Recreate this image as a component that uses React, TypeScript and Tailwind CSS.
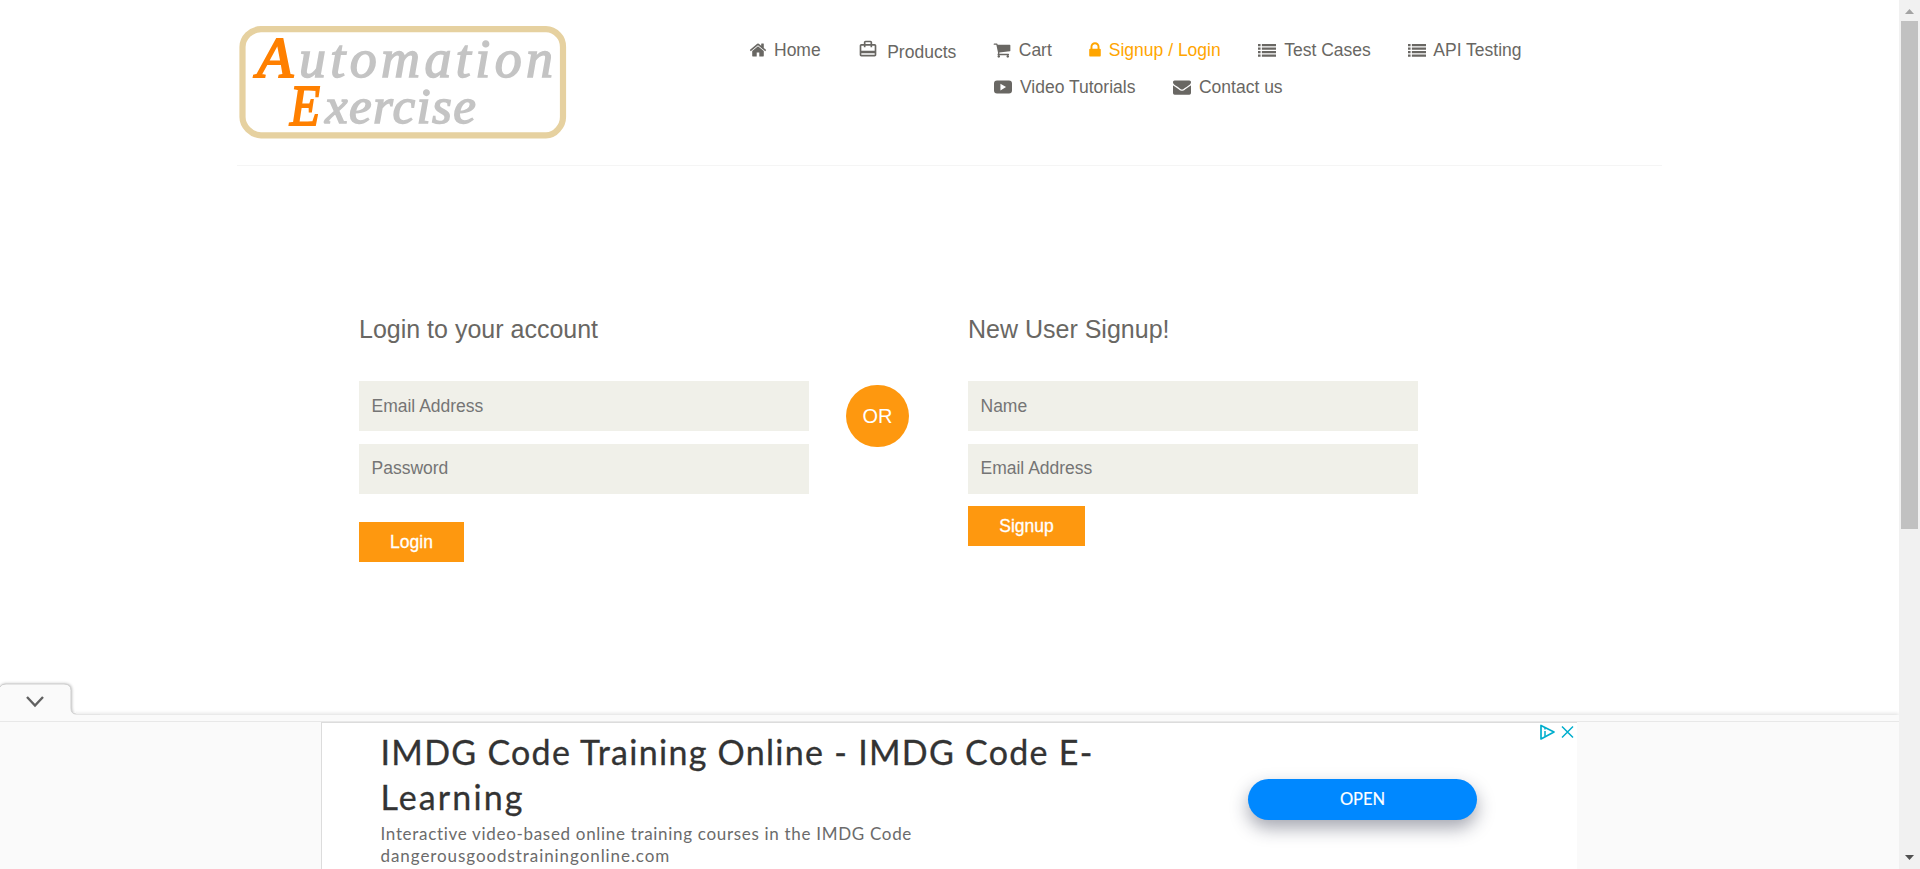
import type { ReactNode } from 'react';
import { MdCardTravel } from 'react-icons/md';

const HOME =
  'M1472 992v480q0 26-19 45t-45 19h-384v-384h-256v384h-384q-26 0-45-19t-19-45v-480q0-1 .5-3t.5-3l575-474 575 474q1 2 1 6zm223-69l-62 74q-8 9-21 11h-3q-13 0-21-7l-692-577-692 577q-12 8-24 7-13-2-21-11l-62-74q-8-10-7-23.5t11-21.5l719-599q32-26 76-26t76 26l244 204v-195q0-14 9-23t23-9h192q14 0 23 9t9 23v408l219 182q10 8 11 21.5t-7 23.5z';
const LOCK =
  'M640 768h512v-192q0-106-75-181t-181-75-181 75-75 181v192zm832 96v576q0 40-28 68t-68 28h-960q-40 0-68-28t-28-68v-576q0-40 28-68t68-28h32v-192q0-184 132-316t316-132 316 132 132 316v192h32q40 0 68 28t28 68z';
const CART =
  'M704 1536q0 52-38 90t-90 38-90-38-38-90 38-90 90-38 90 38 38 90zm896 0q0 52-38 90t-90 38-90-38-38-90 38-90 90-38 90 38 38 90zm128-1088v512q0 24-16.5 42.5t-40.5 21.5l-1044 122q13 60 13 70 0 16-24 64h920q26 0 45 19t19 45-19 45-45 19h-1024q-26 0-45-19t-19-45q0-11 8-31.5t16-36 21.5-40 15.5-29.5l-177-823h-204q-26 0-45-19t-19-45 19-45 45-19h256q16 0 28.5 6.5t19.5 15.5 13 24.5 8 26 5.5 29.5 4.5 26h1201q26 0 45 19t19 45z';
const MAIL =
  'M1792 710v794q0 66-47 113t-113 47h-1472q-66 0-113-47t-47-113v-794q44 49 101 87 362 246 497 345 57 42 92.5 65.5t94.5 48 110 24.5h2q51 0 110-24.5t94.5-48 92.5-65.5q170-123 498-345 57-39 100-87zm0-294q0 79-49 151t-122 123q-376 261-468 325-10 7-42.5 31t-54 38.5-52 32.5-57.5 27-50 9h-2q-23 0-50-9t-57.5-27-52-32.5-54-38.5-42.5-31q-91-64-262-182.5t-205-142.5q-62-42-117-115.5t-55-136.5q0-78 41.5-130t118.5-52h1472q65 0 112.5 47t47.5 113z';
const LIST =
  'M0 288h256v224H0zM0 640h256v224H0zM0 992h256v224H0zM0 1344h256v224H0zM384 288h1408v224H384zM384 640h1408v224H384zM384 992h1408v224H384zM384 1344h1408v224H384z';
const VIDEO =
  'M300 256h1192q300 0 300 300v680q0 300-300 300H300Q0 1536 0 1236V556q0-300 300-300zM640 560v672l560-336z';

function Glyph({ d, viewBox = '0 0 1792 1792', className }: { d: string; viewBox?: string; className: string }) {
  return (
    <svg viewBox={viewBox} className={`mb-[2px] ${className}`} fill="currentColor" fillRule="evenodd">
      <path d={d} />
    </svg>
  );
}

function NavItem({ icon, label, className }: { icon: ReactNode; label: string; className: string }) {
  return (
    <a className={`flex shrink-0 items-center whitespace-nowrap ${className}`}>
      {icon}
      <span>{label}</span>
    </a>
  );
}

function Logo() {
  return (
    <svg width="330" height="116" viewBox="237 24 330 116" className="ml-[237px] mt-6 shrink-0">
      <path
        d="M261 29.2H546Q553 29.2 558.500 35Q563 39.500 563 47V117Q563 124 558 129.500Q553 135.300 546 135.300H261Q254 135.300 248 129.500Q242.500 124 242.500 117V47Q242.500 40 248 34.500Q254 29.200 261 29.200Z"
        fill="none"
        stroke="#e6d1a0"
        strokeWidth="6.200"
      />
      <g fontFamily="'Liberation Serif', serif" fontStyle="italic">
        <text x="257" y="77" fontSize="56" fill="#ff8000" stroke="#ff8000" strokeWidth="2" textLength="36" lengthAdjust="spacingAndGlyphs">A</text>
        <text x="299" y="77" fontSize="54" fill="#c4c4c4" stroke="#c4c4c4" strokeWidth="1.500" textLength="254" lengthAdjust="spacing">utomation</text>
        <text x="290" y="125" fontSize="57" fill="#ff8000" stroke="#ff8000" strokeWidth="2" textLength="30" lengthAdjust="spacingAndGlyphs">E</text>
        <text x="325" y="123" fontSize="51" fill="#c4c4c4" stroke="#c4c4c4" strokeWidth="1.500" textLength="151" lengthAdjust="spacing">xercise</text>
      </g>
    </svg>
  );
}

function Header() {
  return (
    <header className="flex h-[165px] shrink-0">
      <Logo />
      <nav className="flex flex-col text-[17.5px] leading-[25px] text-[#696763]">
        <div className="mt-[38px] flex h-[25px]">
          <NavItem className="ml-[182px]" label="Home" icon={<Glyph d={HOME} className="mr-[7px] h-[18px] w-[18px]" />} />
          <NavItem
            className="relative top-[2px] ml-[37.5px]"
            label="Products"
            icon={<MdCardTravel className="relative -top-[4px] mr-[9px] h-5 w-5" />}
          />
          <NavItem className="ml-[37px]" label="Cart" icon={<Glyph d={CART} className="mr-[7.5px] h-[18px] w-[18px]" />} />
          <NavItem
            className="ml-[37px] text-[#ffa500]"
            label="Signup / Login"
            icon={<Glyph d={LOCK} viewBox="320 0 1152 1792" className="mr-[8px] h-[18px] w-[12px]" />}
          />
          <NavItem className="ml-[37.5px]" label="Test Cases" icon={<Glyph d={LIST} className="mr-[8px] h-[18px] w-[18px]" />} />
          <NavItem className="ml-[37px]" label="API Testing" icon={<Glyph d={LIST} className="mr-[7.5px] h-[18px] w-[18px]" />} />
        </div>
        <div className="mt-[12px] flex h-[25px]">
          <NavItem className="ml-[427px]" label="Video Tutorials" icon={<Glyph d={VIDEO} className="mr-[8px] h-[18px] w-[18px]" />} />
          <NavItem className="ml-[37.5px]" label="Contact us" icon={<Glyph d={MAIL} className="mr-[8px] h-[18px] w-[18px]" />} />
        </div>
      </nav>
    </header>
  );
}

const field =
  'block h-[50px] w-[450px] bg-[#f0f0e9] pl-[12.5px] text-[17.5px] text-[#696763] placeholder:text-[#757575] outline-none';
const heading = 'mb-[38px] text-[25px] leading-[28px] text-[#696763]';
const button = 'block h-10 bg-[#fe980f] text-[17.5px] text-white [-webkit-text-stroke:0.3px_white]';

function Forms() {
  return (
    <section className="flex flex-1 items-start pl-[359px] pt-[149px]">
      <form className="w-[450px]">
        <h2 className={heading}>Login to your account</h2>
        <input className={`pt-px ${field}`} placeholder="Email Address" />
        <input className={`mt-[13px] pb-px ${field}`} placeholder="Password" />
        <button type="button" className={`mt-[28px] w-[105px] ${button}`}>Login</button>
      </form>
      <div className="ml-[37px] mt-[70px] flex h-[62px] w-[63px] items-center justify-center rounded-full bg-[#fe980f] text-[20px] text-white">
        OR
      </div>
      <form className="ml-[59px] w-[450px]">
        <h2 className={heading}>New User Signup!</h2>
        <input className={`pt-px ${field}`} placeholder="Name" />
        <input className={`mt-[13px] pb-px ${field}`} placeholder="Email Address" />
        <button type="button" className={`mt-[12px] w-[117px] ${button}`}>Signup</button>
      </form>
    </section>
  );
}

function AdTab() {
  return (
    <svg width="110" height="38" viewBox="0 0 110 38" className="block shrink-0">
      <defs>
        <filter id="soft" x="-10%" y="-20%" width="120%" height="140%">
          <feGaussianBlur stdDeviation="1.500" />
        </filter>
      </defs>
      <path d="M0 9Q1 5.500 6 5.500H65Q72 5.500 72 12V30Q72 36 77 36H0Z" fill="#000" opacity="0.250" filter="url(#soft)" />
      <path d="M0 9Q1 6 6 6H64Q71 6 71 12.500V30Q71 36 76 36H100V38H0Z" fill="#fafafa" />
      <path d="M0 9Q1 6 6 6H64Q71 6 71 12.500V30Q71 36 76 36" fill="none" stroke="#cfcfcf" />
      <path d="M27 19L35 27.500L43 19" fill="none" stroke="#616161" strokeWidth="2.400" />
    </svg>
  );
}

function Ad() {
  return (
    <footer className="flex shrink-0 flex-col">
      <AdTab />
      <div className="-mt-px h-[7px] shrink-0 border-b border-[#e8e8e8] bg-[#fafafa] shadow-[0_-1px_4px_rgba(0,0,0,0.14)] [clip-path:polygon(0_0,76px_0,76px_-6px,100%_-6px,100%_100%,0_100%)]" />
      <div className="flex h-[147px] bg-[#fafafa]">
        <div className="ml-[321px] flex w-[1256px] border-l border-t border-[#dcdcdc] bg-white font-['Lato',sans-serif]">
          <div className="ml-[58.5px] w-[867.5px] shrink-0 whitespace-nowrap">
            <div className="pt-[6px] text-[34px] leading-[45px] tracking-[1.28px] text-[#333333] [-webkit-text-stroke:0.3px_#333333]">
              IMDG Code Training Online - IMDG Code E-
              <br />
              <span className="tracking-[2.1px]">Learning</span>
            </div>
            <div className="pt-[4px] text-[17px] leading-[22px] tracking-[0.69px] text-[#6b6b6b]">
              Interactive video-based online training courses in the IMDG Code
              <br />
              <span className="tracking-[0.93px]">dangerousgoodstrainingonline.com</span>
            </div>
          </div>
          <button
            type="button"
            className="mt-[56px] h-[41px] w-[229px] shrink-0 rounded-full bg-[#0088ff] text-[16.5px] text-white shadow-[0_8px_18px_rgba(30,35,60,0.4)] [-webkit-text-stroke:0.15px_white]"
          >
            OPEN
          </button>
          <svg width="36" height="18" viewBox="0 0 36 18" className="ml-[62px] shrink-0" fill="none" stroke="#00aecd" strokeWidth="1.500">
            <path d="M2 2.500V16L15 9Z" strokeLinejoin="round" strokeWidth="1.700" />
            <path d="M6 8V13.500M6 5V6.500" />
            <path d="M23 3.500L34 14.500M34 3.500L23 14.500" />
          </svg>
        </div>
      </div>
    </footer>
  );
}

function Scrollbar() {
  return (
    <div className="flex w-[21px] shrink-0 flex-col items-center bg-[#f1f1f1]">
      <svg width="17" height="21" viewBox="0 0 17 21" className="shrink-0" fill="#a3a3a3">
        <path d="M4 14L8.500 9L13 14Z" />
      </svg>
      <div className="h-[508px] w-[17px] bg-[#c1c1c1]" />
      <svg width="17" height="21" viewBox="0 0 17 21" className="mt-auto shrink-0" fill="#505050">
        <path d="M4 7L8.500 12L13 7Z" />
      </svg>
    </div>
  );
}

export default function App() {
  return (
    <div className="flex h-[869px] w-[1920px] overflow-hidden bg-white font-['Liberation_Sans',Arial,sans-serif]">
      <main className="flex w-[1899px] shrink-0 flex-col">
        <Header />
        <div className="ml-[237px] h-px w-[1425px] shrink-0 bg-[#f5f5f5]" />
        <Forms />
        <Ad />
      </main>
      <Scrollbar />
    </div>
  );
}
